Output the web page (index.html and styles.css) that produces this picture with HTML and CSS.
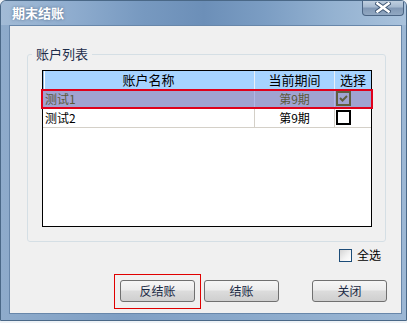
FILE: index.html
```html
<!DOCTYPE html>
<html lang="zh-CN">
<head>
  <meta charset="UTF-8">
  <title>期末结账</title>
  <link rel="stylesheet" href="styles.css">
</head>
<body>
  <div class="window">
    <div class="titlebar">
      <span class="title">期末结账</span>
      <button class="close-btn" title="关闭">
        <svg viewBox="0 0 16 11" width="16" height="11">
          <path d="M2.5,1.5 L13.5,9.5 M13.5,1.5 L2.5,9.5" stroke="#3d5573" stroke-width="4.4" stroke-linecap="square" fill="none"/>
          <path d="M2.5,1.5 L13.5,9.5 M13.5,1.5 L2.5,9.5" stroke="#fff" stroke-width="2.6" stroke-linecap="square" fill="none"/>
        </svg>
      </button>
    </div>

    <div class="frame-body">
      <div class="client">
        <fieldset class="group">
          <legend>账户列表</legend>
          <div class="grid-wrap">
            <table class="grid">
              <thead>
                <tr>
                  <th class="col-name">账户名称</th>
                  <th class="col-period">当前期间</th>
                  <th class="col-check">选择</th>
                </tr>
              </thead>
              <tbody>
                <tr class="selected">
                  <td class="cell-name">测试1</td>
                  <td class="cell-period">第9期</td>
                  <td class="cell-check">
                    <span class="row-check checked">
                      <svg viewBox="0 0 11 11" width="11" height="11">
                        <path d="M2,5 L4.5,7.5 L9,3" stroke="#5f5d3f" stroke-width="2" fill="none"/>
                      </svg>
                    </span>
                  </td>
                </tr>
                <tr>
                  <td class="cell-name">测试2</td>
                  <td class="cell-period">第9期</td>
                  <td class="cell-check"><span class="row-check"></span></td>
                </tr>
              </tbody>
            </table>
            <div class="row-focus"></div>
          </div>
        </fieldset>

        <label class="select-all">
          <span class="checkbox"></span>
          <span>全选</span>
        </label>

        <div class="actions">
          <span class="focus-mark"><button class="btn">反结账</button></span>
          <button class="btn btn-close-account">结账</button>
          <button class="btn btn-exit">关闭</button>
        </div>
      </div>
    </div>
  </div>
</body>
</html>
```

FILE: styles.css
```css
:root {
  --color-client: #f0f0f0;
  --color-group-border: #d5dfe5;
  --color-grid-line: #d4d0c8;
  --color-header: #a6d3ff;
  --color-selected: #a0a3d1;
  --color-selected-text: #5a583a;
  --color-btn-text: #1b2a45;
  --font-ui: "Noto Sans CJK SC", "DejaVu Sans", sans-serif;
}

* {
  box-sizing: border-box;
  margin: 0;
  padding: 0;
}

body {
  font-family: var(--font-ui);
  font-size: 12px;
  background-color: #eef2f6;
  color: #000;
}

.window {
  width: 407px;
  height: 321px;
  border: 1px solid #4a6887;
  border-radius: 6px 6px 0 0;
  background: linear-gradient(90deg, #8eabcb 0%, #7f9fc4 30%, #8aa9cb 60%, #9cb7d4 100%);
  overflow: hidden;
}

/* Title bar */
.titlebar {
  height: 24px;
  display: flex;
  justify-content: space-between;
  align-items: flex-start;
  background: linear-gradient(90deg, #a2bbd6 0%, #8eacce 18%, #7799c0 35%, #6c8fb8 50%, #7b9dc3 65%, #94b2d1 82%, #a9c2dc 100%);
}

.title {
  padding-left: 11px;
  line-height: 23px;
  font-size: 13px;
  font-weight: bold;
  color: #fff;
  text-shadow: 0 0 3px rgba(40, 60, 90, 0.6);
}

.close-btn {
  width: 42px;
  height: 16px;
  margin: -1px 2px 0 0;
  border: 1px solid #4b6584;
  border-top: none;
  border-radius: 0 0 4px 4px;
  background: linear-gradient(180deg, #c3d2e2 0%, #a7bbd1 45%, #8198b5 55%, #91a8c2 100%);
  display: flex;
  align-items: center;
  justify-content: center;
}

/* Client area */
.frame-body {
  padding: 0 4px 6px 8px;
}

.client {
  width: 393px;
  height: 289px;
  border: 1px solid #6887aa;
  background-color: var(--color-client);
}

.group {
  width: 359px;
  height: 196px;
  margin: 20px 0 0 17px;
  padding: 8px 13px 14px 14px;
  border: 1px solid var(--color-group-border);
  border-radius: 3px;
  min-width: 0;
}

.group legend {
  margin-left: -10px;
  padding: 0 4px;
  line-height: 16px;
  font-size: 13px;
  color: #1e2d4a;
}

/* Data grid */
.grid-wrap {
  position: relative;
  width: 330px;
  height: 157px;
  border: 1px solid #000;
  background-color: #fff;
}

.grid {
  width: 328px;
  border-spacing: 0;
  table-layout: fixed;
}

.grid th {
  height: 19px;
  font-size: 13px;
  font-weight: normal;
  line-height: 18px;
  text-align: center;
  background-color: var(--color-header);
  border-bottom: 1px solid #b5b2aa;
  border-right: 1px solid #e8eef6;
}

.grid th.col-name {
  width: 212px;
  box-shadow: inset 1px 0 #8fb8e0, inset 2px 0 #fff;
}

.grid th.col-period {
  width: 80px;
}

.grid th.col-check {
  width: 36px;
  border-right: none;
}

.grid td {
  height: 19px;
  line-height: 18px;
  border-bottom: 1px solid var(--color-grid-line);
  border-right: 1px solid var(--color-grid-line);
  white-space: nowrap;
}

.grid td.cell-name {
  padding-left: 2px;
}

.grid td.cell-period {
  text-align: center;
}

.grid td.cell-check {
  border-right: none;
  vertical-align: top;
}

.grid tr.selected td {
  background-color: var(--color-selected);
  color: var(--color-selected-text);
  border-right-color: #b2b5e6;
}

.row-check {
  display: block;
  width: 15px;
  height: 15px;
  margin: 1px 0 0 1px;
  border: 2px solid #000;
  background-color: #fff;
}

.row-check.checked {
  border-color: #5f5d3f;
  background-color: var(--color-selected);
}

.row-check svg {
  display: block;
}

.row-focus {
  position: absolute;
  left: -2px;
  top: 18px;
  width: 332px;
  height: 20px;
  border: 2px solid #e0001a;
  pointer-events: none;
}

/* Select all */
.select-all {
  display: flex;
  justify-content: flex-end;
  align-items: center;
  gap: 5px;
  height: 14px;
  margin-top: 6px;
  padding-right: 20px;
  line-height: 14px;
}

.checkbox {
  width: 13px;
  height: 13px;
  border: 1px solid #1c4c78;
  background: linear-gradient(135deg, #d4d4d4 0%, #f4f4f4 60%, #fff 100%);
}

/* Buttons */
.actions {
  display: flex;
  align-items: flex-start;
  margin-top: 12px;
  padding-left: 104px;
}

.focus-mark {
  display: block;
  padding: 5px 5px 6px;
  border: 1px solid #e00000;
}

.btn {
  display: block;
  width: 75px;
  height: 22px;
  border: 1px solid #707070;
  border-radius: 3px;
  background: linear-gradient(180deg, #f6f6f6 0%, #ececec 45%, #dcdcdc 50%, #cfcfcf 100%);
  font-family: var(--font-ui);
  font-size: 12px;
  line-height: 20px;
  color: var(--color-btn-text);
  cursor: pointer;
}

.btn-close-account {
  margin: 6px 0 0 3px;
}

.btn-exit {
  margin: 6px 0 0 33px;
}
```
